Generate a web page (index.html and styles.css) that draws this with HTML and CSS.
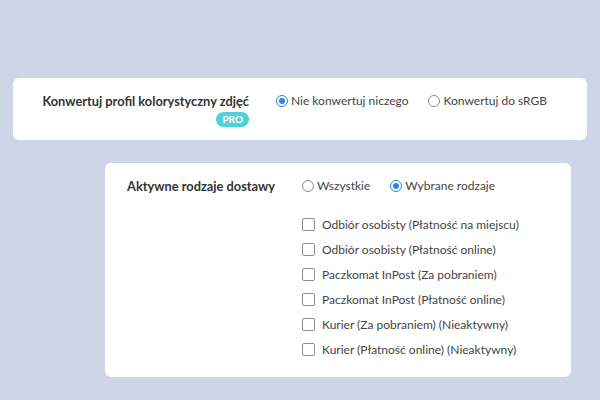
FILE: index.html
```html
<!DOCTYPE html>
<html lang="pl">
<head>
  <meta charset="UTF-8">
  <title>Ustawienia</title>
  <link rel="stylesheet" href="styles.css">
</head>
<body>
  <div class="card card-color">
    <div class="field-label">
      <span>Konwertuj profil kolorystyczny zdjęć</span>
      <span class="badge-pro">PRO</span>
    </div>
    <div class="field-options">
      <div class="radio-row">
        <label class="radio checked"><span class="dot"></span>Nie konwertuj niczego</label>
        <label class="radio"><span class="dot"></span>Konwertuj do sRGB</label>
      </div>
    </div>
  </div>

  <div class="card card-delivery">
    <div class="field-label">
      <span>Aktywne rodzaje dostawy</span>
    </div>
    <div class="field-options">
      <div class="radio-row">
        <label class="radio"><span class="dot"></span>Wszystkie</label>
        <label class="radio checked"><span class="dot"></span>Wybrane rodzaje</label>
      </div>
      <ul class="check-list">
        <li><span class="box"></span>Odbiór osobisty (Płatność na miejscu)</li>
        <li><span class="box"></span>Odbiór osobisty (Płatność online)</li>
        <li><span class="box"></span>Paczkomat InPost (Za pobraniem)</li>
        <li><span class="box"></span>Paczkomat InPost (Płatność online)</li>
        <li><span class="box"></span>Kurier (Za pobraniem) (Nieaktywny)</li>
        <li><span class="box"></span>Kurier (Płatność online) (Nieaktywny)</li>
      </ul>
    </div>
  </div>
</body>
</html>
```

FILE: styles.css
```css
body {
  margin: 0;
  padding: 78px 13px 0;
  background-color: #ced5e7;
  font-family: Lato, "Noto Sans", sans-serif;
  font-size: 12px;
  color: #3b3b3b;
}

.card {
  display: flex;
  align-items: flex-start;
  background-color: #fff;
  border-radius: 6px;
}

.card-color {
  width: 574px;
  height: 62px;
  box-sizing: border-box;
  padding: 15px 0 0;
}

.card-color .field-label {
  width: 236px;
}

.card-delivery {
  width: 466px;
  height: 214px;
  box-sizing: border-box;
  margin: 23px 0 0 92px;
  padding: 15px 0 0;
}

.card-delivery .field-label {
  width: 170px;
}

.field-label {
  display: flex;
  flex-direction: column;
  align-items: flex-end;
  font-size: 12.8px;
  font-weight: bold;
  line-height: 16px;
  color: #333;
}

.badge-pro {
  margin-top: 3px;
  padding: 0 6px;
  height: 15px;
  line-height: 15px;
  border-radius: 8px;
  background-color: #4fd2d6;
  color: #fff;
  font-size: 10px;
  font-weight: bold;
}

.field-options {
  margin-left: 27px;
}

.radio-row {
  display: flex;
  gap: 20px;
  line-height: 16px;
}

.radio {
  display: flex;
  align-items: center;
  gap: 3px;
  color: #444;
}

.dot {
  box-sizing: border-box;
  width: 12px;
  height: 12px;
  border: 1.5px solid #8d8d95;
  border-radius: 50%;
  position: relative;
}

.radio.checked .dot {
  border-color: #2589e8;
}

.radio.checked .dot::after {
  content: "";
  position: absolute;
  left: 1.5px;
  top: 1.5px;
  width: 6px;
  height: 6px;
  border-radius: 50%;
  background-color: #2589e8;
}

.check-list {
  list-style: none;
  margin: 18px 0 0;
  padding: 0;
}

.check-list li {
  display: flex;
  align-items: center;
  gap: 7px;
  height: 25px;
  color: #444;
}

.box {
  box-sizing: border-box;
  width: 13px;
  height: 13px;
  border: 1.5px solid #8d8d95;
  border-radius: 2px;
}
```
